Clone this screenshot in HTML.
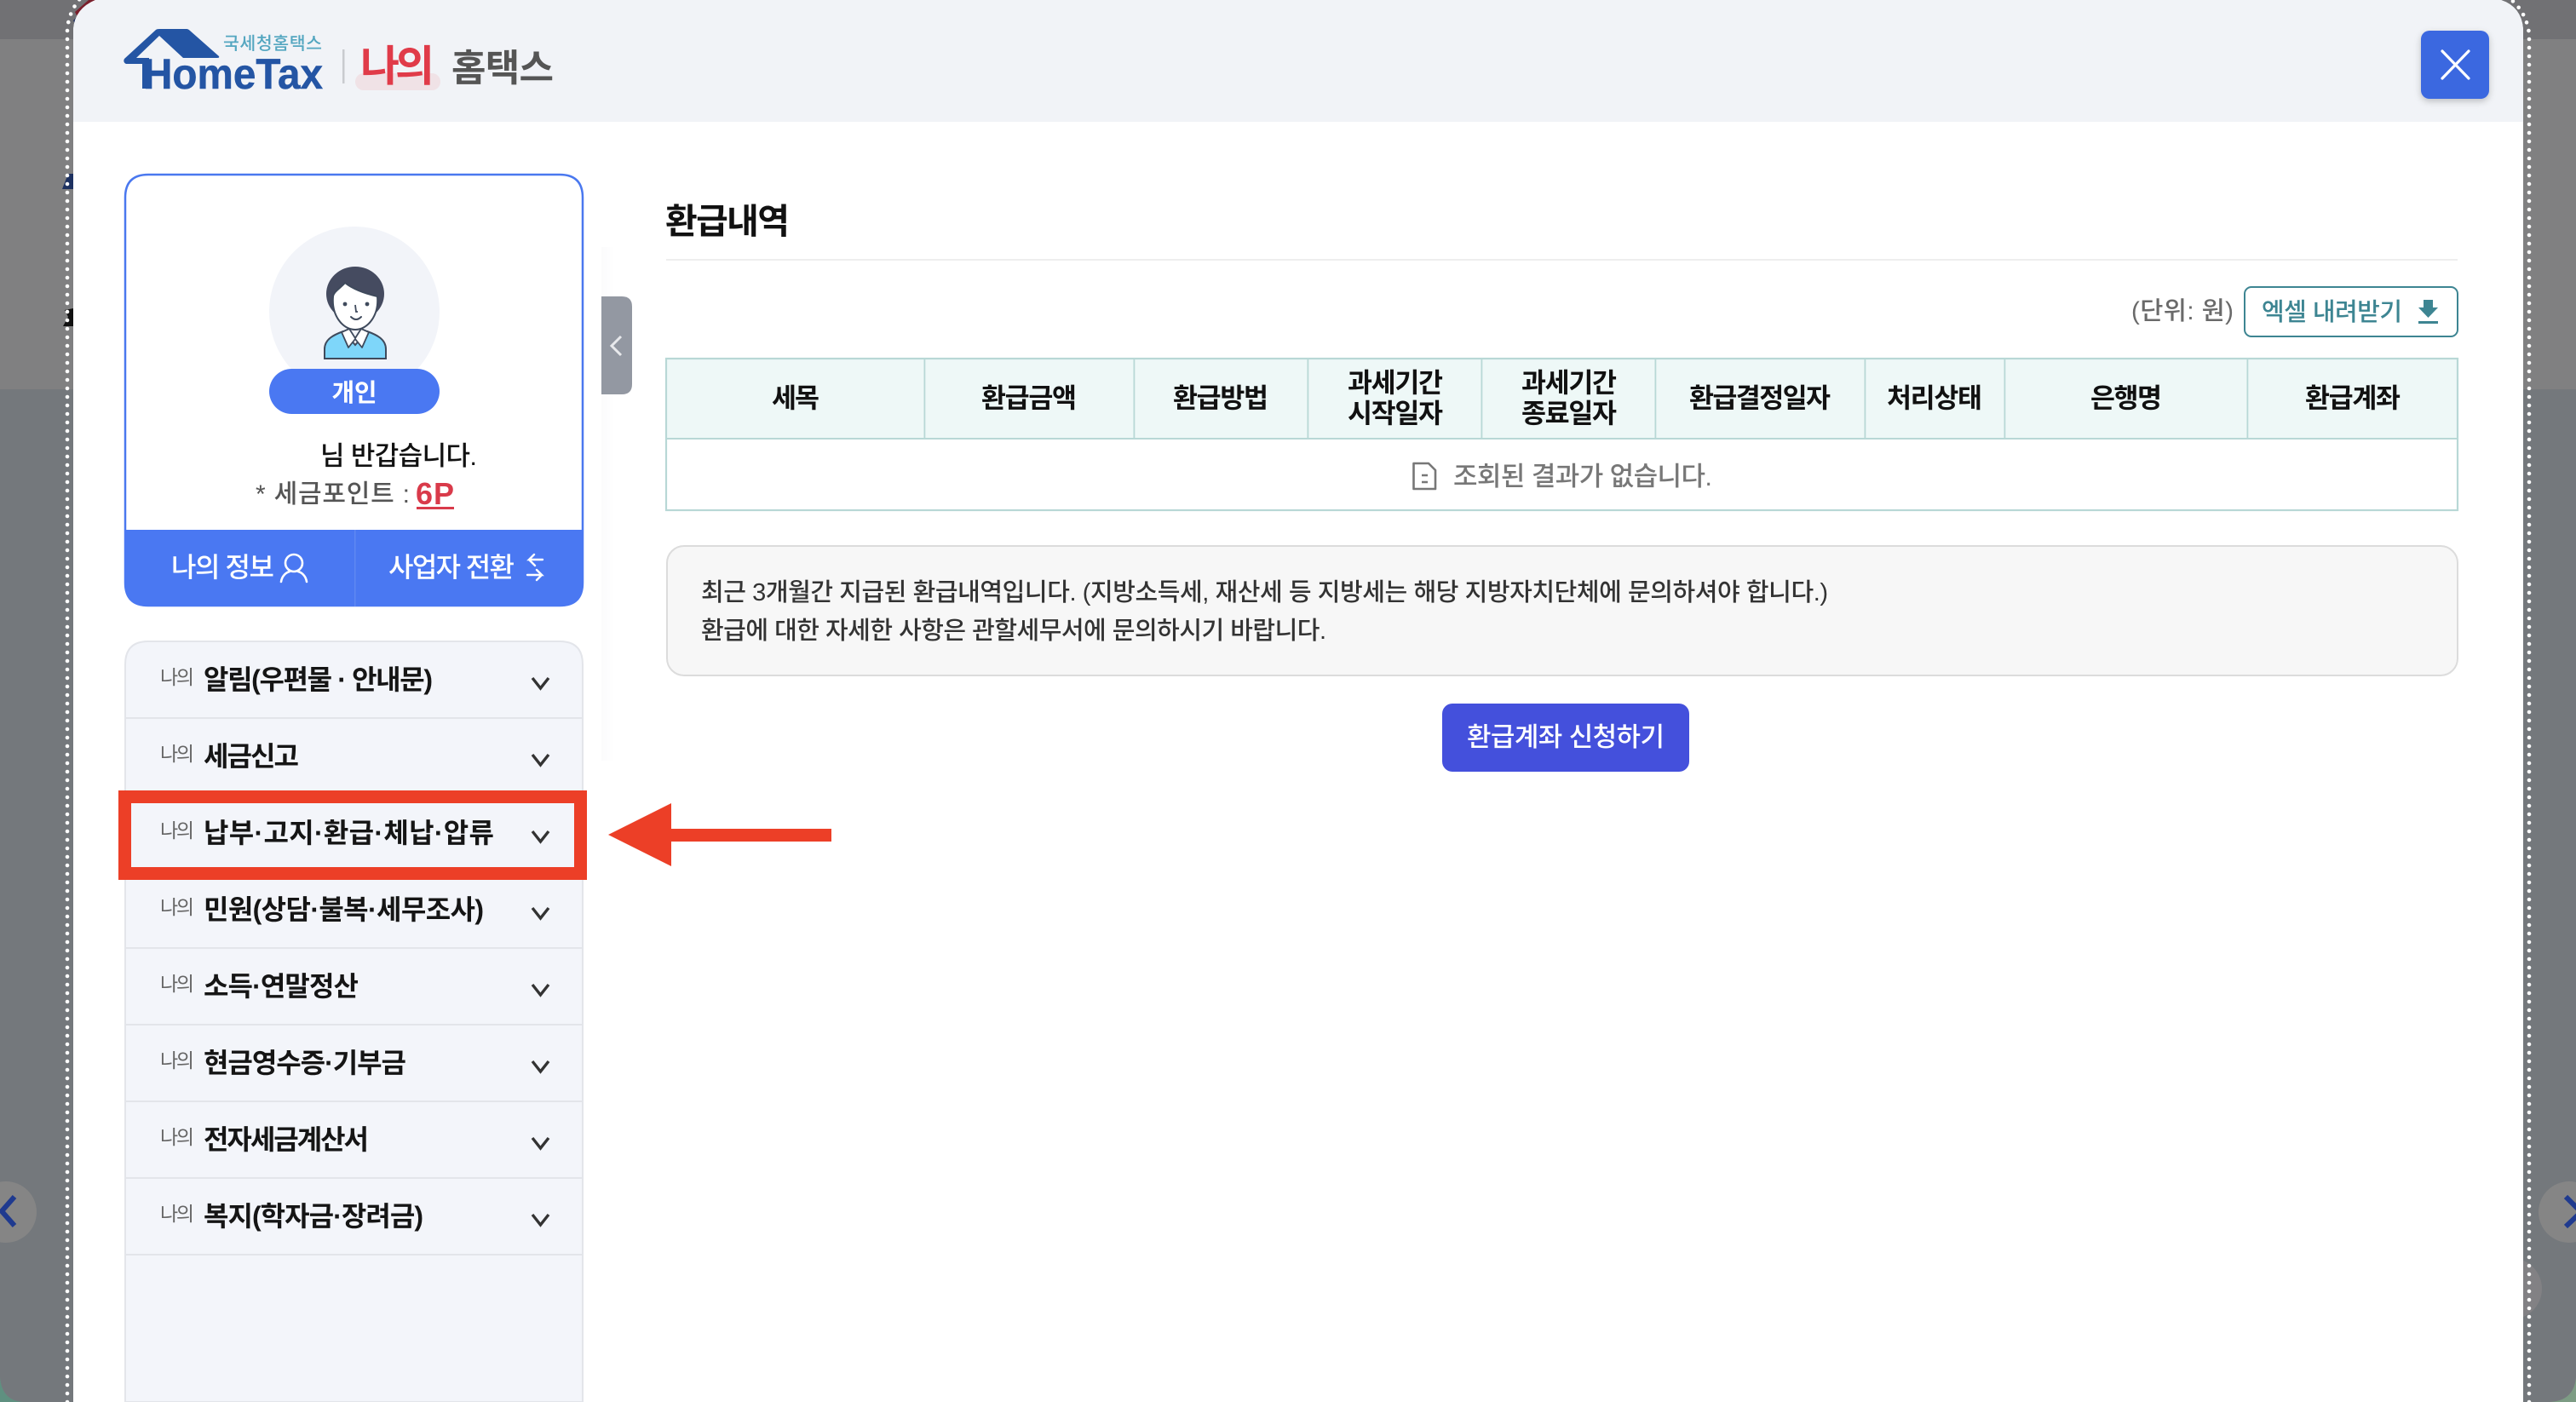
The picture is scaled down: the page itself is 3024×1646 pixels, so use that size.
<!DOCTYPE html>
<html lang="ko">
<head>
<meta charset="utf-8">
<title>환급내역</title>
<style>
html,body{margin:0;padding:0;width:3024px;height:1646px;overflow:hidden;background:#808080}
svg{display:block;position:absolute;left:0;top:0}
text{font-family:"Liberation Sans","Noto Sans CJK KR",sans-serif;white-space:pre}
.b{font-weight:700}.m{font-weight:500}
.h{font-weight:700;font-size:31.5px;fill:#111;text-anchor:middle}
.l{font-size:23px;fill:#666}
.n{font-size:32px;font-weight:700;fill:#151515}
.c{fill:none;stroke:#333;stroke-width:3.4}
</style>
</head>
<body>
<svg width="3024" height="1646" viewBox="0 0 3024 1646" xmlns="http://www.w3.org/2000/svg">
<defs>
<linearGradient id="sh" x1="0" x2="1" y1="0" y2="0"><stop offset="0" stop-color="#fbfbfc"/><stop offset="1" stop-color="#fff"/></linearGradient>
<filter id="ds" x="-20%" y="-20%" width="140%" height="150%"><feDropShadow dx="0" dy="3" stdDeviation="4" flood-color="#000" flood-opacity=".22"/></filter>
</defs>

<!-- background -->
<rect x="0" y="1560" width="3024" height="86" fill="#5f9080"/>
<rect x="2900" y="1560" width="124" height="86" fill="#7d9c84"/>
<path d="M0 0H3024V1616Q3022 1646 2990 1646H30Q2 1646 0 1616Z" fill="#808081"/>
<rect x="0" y="0" width="3024" height="46" fill="#717174"/>
<path d="M0 457H3024V1616Q3022 1646 2990 1646H30Q2 1646 0 1616Z" fill="#74787c"/>
<circle cx="7" cy="1423" r="36" fill="#858585"/>
<circle cx="3016" cy="1423" r="36" fill="#858585"/>
<circle cx="2948" cy="1513" r="36" fill="#828184"/>
<path d="M17 1405 2 1422 17 1439" fill="none" stroke="#1f3a8f" stroke-width="6"/>
<path d="M3012 1405 3030 1423 3012 1440" fill="none" stroke="#1f3a8f" stroke-width="6"/>
<path d="M73 222 80 204H90V222Z" fill="#1d3160"/>
<path d="M76 364 86 362V383H74L80 372Z" fill="#111"/>
<path d="M88 14 104 0H112L92 22Z" fill="#7a1f2c"/>
<path d="M86 24 92 18 98 22 90 32Z" fill="#22305e"/>

<!-- dotted outlines -->
<path d="M79 1646V36Q80 14 96 -4" fill="none" stroke="#fff" stroke-width="4.6" stroke-linecap="round" stroke-dasharray="0 10"/>
<path d="M2969 1646V40Q2966 14 2946 -2" fill="none" stroke="#fff" stroke-width="4.6" stroke-linecap="round" stroke-dasharray="0 10"/>

<!-- modal -->
<path d="M86 1646V34Q88 10 112 0H2936Q2960 8 2962 34V1646Z" fill="#fff"/>
<path d="M86 143V34Q88 10 112 0H2936Q2960 8 2962 34V143Z" fill="#f1f3f7"/>
<rect x="706" y="290" width="16" height="603" fill="url(#sh)"/>

<!-- logo -->
<path d="M146 69 183 35Q184 34 187 34H219Q221 34 223 36L257 66Q258 68 255 68H215L187 42 160 68H175V104H167V75H148Q144 73 146 69Z" fill="#2455a4"/>
<text x="168" y="104" font-size="50" class="b" fill="#2455a4" stroke="#2455a4" stroke-width=".5" textLength="211" lengthAdjust="spacingAndGlyphs">HomeTax</text>
<text x="262" y="58" font-size="20.5" class="m" fill="#54a6c0" textLength="116">국세청홈택스</text>
<rect x="402" y="58" width="2.5" height="40" fill="#c9cbcf"/>
<rect x="417" y="86" width="100" height="20" rx="10" fill="#f0e2e6"/>
<text x="423" y="95" font-size="50" class="b" fill="#e03b49" textLength="87">나의</text>
<text x="530" y="95" font-size="44" class="b" fill="#555" textLength="120">홈택스</text>

<!-- close -->
<rect x="2842" y="36" width="80" height="80" rx="10" fill="#3b67e0" filter="url(#ds)"/>
<path d="M2867 60 2898 92M2898 60 2867 92" stroke="#fff" stroke-width="3.2" stroke-linecap="round"/>

<!-- profile card -->
<path d="M147 684V232Q147 205 174 205H657Q684 205 684 232V684Q684 711 657 711H174Q147 711 147 684Z" fill="#fff" stroke="#4a78ef" stroke-width="2.5"/>
<circle cx="416" cy="366" r="100" fill="#f2f4f9"/>
<ellipse cx="417" cy="345" rx="34" ry="32" fill="#454b60"/>
<path d="M381 421V410C381 398 392 393 403 389L417 405 431 389C442 393 453 398 453 410V421Z" fill="#7ed6fa" stroke="#3f4a5c" stroke-width="2"/>
<path d="M391 348C392 342 400 338 405 332 415 340 430 345 443 348 445 370 432 387 417 387 402 387 389 370 391 348Z" fill="#fff" stroke="#3f4a5c" stroke-width="2"/>
<path d="M401 390 410 386 417 397 424 386 433 390 425 408 417 398 409 408Z" fill="#fff" stroke="#3f4a5c" stroke-width="1.8" stroke-linejoin="round"/>
<circle cx="405" cy="357" r="2.4" fill="#3f4a5c"/><circle cx="431" cy="357" r="2.4" fill="#3f4a5c"/>
<path d="M417 358 418 366H420" fill="none" stroke="#3f4a5c" stroke-width="1.8"/>
<path d="M412 372Q418 378 424 372" fill="none" stroke="#3f4a5c" stroke-width="2" stroke-linecap="round"/>
<rect x="316" y="433" width="200" height="53" rx="26.5" fill="#4a78f2"/>
<text x="416" y="471" font-size="29" class="b" fill="#fff" text-anchor="middle" textLength="53">개인</text>
<text x="376" y="546" font-size="31" class="m" fill="#111" textLength="184">님 반갑습니다.</text>
<text x="300" y="590" font-size="30" fill="#555" class="m" textLength="181">* 세금포인트 :</text>
<text x="488" y="592" font-size="36" class="b" fill="#d93a4a" textLength="45">6P</text>
<rect x="489" y="595" width="44" height="3" fill="#d93a4a"/>
<path d="M146 622H685V684Q685 712 657 712H174Q146 712 146 684Z" fill="#4a78f2"/>
<rect x="416" y="622" width="1.5" height="90" fill="#5f88f2"/>
<text x="201" y="677" font-size="32" class="m" fill="#fff" textLength="121">나의 정보</text>
<circle cx="345" cy="661" r="10" fill="none" stroke="#fff" stroke-width="2.6"/>
<path d="M330 683C331 676 336 672 340 671M360 683C359 676 354 672 350 671" fill="none" stroke="#fff" stroke-width="2.6" stroke-linecap="round"/>
<text x="456" y="677" font-size="32" class="m" fill="#fff" textLength="148">사업자 전환</text>
<path d="M637 657H621L627 651M621 657 628 664M619 675H636L630 669M636 675 630 681" fill="none" stroke="#fff" stroke-width="2.4" stroke-linecap="round"/>

<!-- collapse tab -->
<path d="M706 348H730Q742 348 742 360V451Q742 463 730 463H706Z" fill="#9398a2"/>
<path d="M729 395 718 406 729 417" fill="none" stroke="#e8e9ec" stroke-width="3"/>

<!-- menu -->
<path d="M147 1646V780Q147 753 174 753H657Q684 753 684 780V1646Z" fill="#f3f5fa" stroke="#e3e5ea" stroke-width="2"/>
<g fill="#e3e5ea">
<rect x="147" y="842" width="537" height="2"/><rect x="147" y="932" width="537" height="2"/><rect x="147" y="1022" width="537" height="2"/><rect x="147" y="1112" width="537" height="2"/><rect x="147" y="1202" width="537" height="2"/><rect x="147" y="1292" width="537" height="2"/><rect x="147" y="1382" width="537" height="2"/><rect x="147" y="1472" width="537" height="2"/>
</g>
<text class="l" x="188" y="803" textLength="40">나의</text><text class="n" x="239" y="809" textLength="269">알림(우편물 · 안내문)</text>
<text class="l" x="188" y="893" textLength="40">나의</text><text class="n" x="239" y="899" textLength="112">세금신고</text>
<text class="l" x="188" y="983" textLength="40">나의</text><text class="n" x="239" y="989" textLength="341">납부·고지·환급·체납·압류</text>
<text class="l" x="188" y="1073" textLength="40">나의</text><text class="n" x="239" y="1079" textLength="329">민원(상담·불복·세무조사)</text>
<text class="l" x="188" y="1163" textLength="40">나의</text><text class="n" x="239" y="1169" textLength="182">소득·연말정산</text>
<text class="l" x="188" y="1253" textLength="40">나의</text><text class="n" x="239" y="1259" textLength="238">현금영수증·기부금</text>
<text class="l" x="188" y="1343" textLength="40">나의</text><text class="n" x="239" y="1349" textLength="194">전자세금계산서</text>
<text class="l" x="188" y="1433" textLength="40">나의</text><text class="n" x="239" y="1439" textLength="258">복지(학자금·장려금)</text>
<path class="c" d="M625 796 634.500 808 644 796"/>
<path class="c" d="M625 886 634.500 898 644 886"/>
<path class="c" d="M625 976 634.500 988 644 976"/>
<path class="c" d="M625 1066 634.500 1078 644 1066"/>
<path class="c" d="M625 1156 634.500 1168 644 1156"/>
<path class="c" d="M625 1246 634.500 1258 644 1246"/>
<path class="c" d="M625 1336 634.500 1348 644 1336"/>
<path class="c" d="M625 1426 634.500 1438 644 1426"/>

<!-- highlight -->
<path fill-rule="evenodd" d="M139 928H689V1033H139ZM154 943V1018H674V943Z" fill="#ec3f27"/>
<path d="M714 980 788 943V973H976V988H788V1017Z" fill="#ec3f27"/>

<!-- content -->
<text x="781" y="274" font-size="41" class="b" fill="#111" textLength="146">환급내역</text>
<rect x="782" y="304" width="2103" height="2" fill="#eeeeee"/>
<text x="2502" y="375" font-size="29.5" fill="#6a6a6a" class="m" textLength="120">(단위: 원)</text>
<rect x="2635" y="337" width="250" height="58" rx="8" fill="#fff" stroke="#3d8592" stroke-width="2"/>
<text x="2655" y="376" font-size="29" class="m" fill="#3d8592" textLength="165">엑셀 내려받기</text>
<path d="M2845 352H2856V361H2862L2850.500 373 2839 361H2845ZM2839 377H2862V380H2839Z" fill="#3d8592"/>

<!-- table -->
<rect x="782" y="421" width="2103" height="94" fill="#eef8f7"/>
<rect x="782" y="421" width="2103" height="178" fill="none" stroke="#b8d8d6" stroke-width="2.2"/>
<rect x="782" y="514" width="2103" height="2" fill="#b8d8d6"/>
<g fill="#b8d8d6">
<rect x="1084.500" y="421" width="1.800" height="94"/><rect x="1330.500" y="421" width="1.800" height="94"/><rect x="1534.500" y="421" width="1.800" height="94"/><rect x="1738.500" y="421" width="1.800" height="94"/><rect x="1942.500" y="421" width="1.800" height="94"/><rect x="2188.500" y="421" width="1.800" height="94"/><rect x="2352.500" y="421" width="1.800" height="94"/><rect x="2637.500" y="421" width="1.800" height="94"/>
</g>
<text class="h" x="934" y="478" textLength="56">세목</text>
<text class="h" x="1208" y="478" textLength="112">환급금액</text>
<text class="h" x="1433" y="478" textLength="112">환급방법</text>
<text class="h" x="1638" y="460" textLength="112">과세기간</text>
<text class="h" x="1638" y="496" textLength="112">시작일자</text>
<text class="h" x="1842" y="460" textLength="112">과세기간</text>
<text class="h" x="1842" y="496" textLength="112">종료일자</text>
<text class="h" x="2066" y="478" textLength="166">환급결정일자</text>
<text class="h" x="2271" y="478" textLength="112">처리상태</text>
<text class="h" x="2496" y="478" textLength="84">은행명</text>
<text class="h" x="2762" y="478" textLength="112">환급계좌</text>
<path d="M1659.500 544H1677L1685 552V574H1659.500Z" fill="none" stroke="#777" stroke-width="2.600" stroke-linejoin="round"/>
<path d="M1669 558H1676M1669 566H1676" stroke="#777" stroke-width="2.400"/>
<text x="1706" y="570" font-size="31" fill="#777" class="m" textLength="304">조회된 결과가 없습니다.</text>

<!-- notice -->
<rect x="783" y="641" width="2102" height="152" rx="20" fill="#f7f7f7" stroke="#dcdcdc" stroke-width="2"/>
<text x="823" y="705" font-size="29" fill="#333" class="m" textLength="1323">최근 3개월간 지급된 환급내역입니다. (지방소득세, 재산세 등 지방세는 해당 지방자치단체에 문의하셔야 합니다.)</text>
<text x="823" y="750" font-size="29" fill="#333" class="m" textLength="734">환급에 대한 자세한 사항은 관할세무서에 문의하시기 바랍니다.</text>

<!-- button -->
<rect x="1693" y="826" width="290" height="80" rx="12" fill="#4450dc"/>
<text x="1722" y="876" font-size="31" class="m" fill="#fff" textLength="232">환급계좌 신청하기</text>
</svg>
</body>
</html>
